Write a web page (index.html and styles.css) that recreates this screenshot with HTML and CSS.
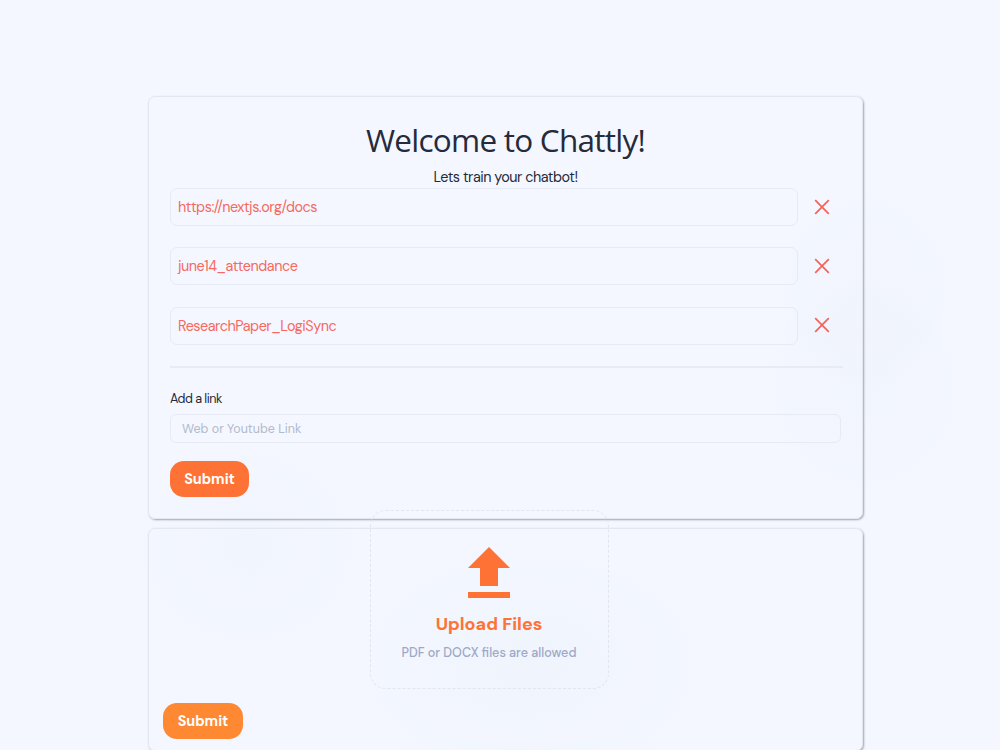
FILE: index.html
```
<!DOCTYPE html>
<html lang="en">
<head>
    <meta charset="UTF-8">
    <meta name="viewport" content="width=device-width, initial-scale=1.0">
    <title>Chattly</title>
    <link rel="stylesheet" href="styles.css">
</head>
<body>
    <div class="container">
        <div class="card train-card">
            <h1>Welcome to Chattly!</h1>
            <p class="subtitle">Lets train your chatbot!</p>

            <div class="source">
                <div class="source-name">https://nextjs.org/docs</div>
                <button class="remove" aria-label="Remove">
                    <svg width="16" height="16" viewBox="0 0 16 16"><path d="M1.2 1.2 14.8 14.8M14.8 1.2 1.2 14.8"/></svg>
                </button>
            </div>
            <div class="source">
                <div class="source-name">june14_attendance</div>
                <button class="remove" aria-label="Remove">
                    <svg width="16" height="16" viewBox="0 0 16 16"><path d="M1.2 1.2 14.8 14.8M14.8 1.2 1.2 14.8"/></svg>
                </button>
            </div>
            <div class="source">
                <div class="source-name">ResearchPaper_LogiSync</div>
                <button class="remove" aria-label="Remove">
                    <svg width="16" height="16" viewBox="0 0 16 16"><path d="M1.2 1.2 14.8 14.8M14.8 1.2 1.2 14.8"/></svg>
                </button>
            </div>

            <hr>

            <form class="link-form">
                <label for="link">Add a link</label>
                <input type="text" id="link" placeholder="Web or Youtube Link">
                <button type="button" class="submit">Submit</button>
            </form>
        </div>

        <div class="card upload-card">
            <div class="dropzone">
                <svg class="upload-icon" width="42" height="51" viewBox="0 0 42 51">
                    <path d="M21 0 42 21H30V39H12V21H0zM0 45H42V51H0z"/>
                </svg>
                <h2>Upload Files</h2>
                <p>PDF or DOCX files are allowed</p>
            </div>
            <button type="button" class="submit submit-files">Submit</button>
        </div>
    </div>
</body>
</html>
```
FILE: styles.css
```
* {
    box-sizing: border-box;
}

body {
    margin: 0;
    height: 750px;
    overflow: hidden;
    font-family: "DM Sans", Inter, sans-serif;
    color: #252b3a;
    background-color: #f4f7ff;
    /* faint blobs behind the cards */
    background-image:
        radial-gradient(ellipse 100px 110px at 865px 385px, rgba(225, 234, 243, 0.14), rgba(225, 234, 243, 0.08) 80%, transparent),
        radial-gradient(ellipse 90px 100px at 866px 290px, rgba(225, 234, 243, 0.12), rgba(225, 234, 243, 0.07) 80%, transparent),
        radial-gradient(ellipse 115px 105px at 248px 548px, rgba(225, 234, 243, 0.17), rgba(225, 234, 243, 0.05) 85%, transparent),
        radial-gradient(ellipse 180px 120px at 530px 665px, rgba(225, 234, 243, 0.22), rgba(225, 234, 243, 0.06) 85%, transparent);
}

.container {
    width: 715px;
    margin: 96px 0 0 148px;
    display: flex;
    flex-direction: column;
    gap: 9px;
}

.card {
    border: 1px solid #e2e7f1;
    border-radius: 7px;
    box-shadow: 1px 1px 2px rgba(60, 65, 75, 0.45);
}

.train-card {
    height: 423px;
    padding: 21px 21px 0 21px;
}

h1 {
    margin: 0;
    font-family: "Segoe UI", "Open Sans", sans-serif;
    font-size: 31.5px;
    font-weight: 400;
    line-height: 44px;
    letter-spacing: -0.75px;
    text-align: center;
}

.subtitle {
    margin: 6px 0 1px;
    font-size: 14.4px;
    line-height: 19px;
    letter-spacing: -0.49px;
    text-align: center;
}

.source {
    display: flex;
    align-items: center;
    gap: 16px;
    margin-bottom: 21.3px;
}

.source-name {
    width: 628px;
    height: 38px;
    padding: 0 7px;
    border: 1px solid #e5eaf4;
    border-radius: 7px;
    font-size: 14.4px;
    line-height: 37px;
    letter-spacing: -0.48px;
    color: #f56a60;
}

.remove {
    display: flex;
    margin-top: -1px;
    padding: 0;
    border: none;
    background: none;
}

.remove svg {
    fill: none;
    stroke: #f56358;
    stroke-width: 1.7;
}

hr {
    width: 673px;
    height: 2px;
    margin: 0;
    border: none;
    background-color: #e7ebf3;
}

.link-form {
    display: flex;
    flex-direction: column;
    align-items: flex-start;
    padding-top: 22px;
}

label {
    font-size: 12.6px;
    line-height: 18px;
    letter-spacing: -0.5px;
}

.link-form input {
    width: 671px;
    height: 29px;
    margin: 6px 0 18px;
    padding: 2px 11px 0;
    border: 1px solid #e5eaf4;
    border-radius: 6px;
    background: transparent;
    font-family: inherit;
    font-size: 12.5px;
}

.link-form input::placeholder {
    color: #b1bac9;
}

.submit {
    width: 79px;
    height: 36px;
    padding: 0;
    border: none;
    border-radius: 14px;
    background-color: #ff7235;
    color: white;
    font-family: inherit;
    font-size: 14.4px;
    font-weight: 700;
}

.upload-card {
    height: 223px;
    padding-left: 14px;
}

.dropzone {
    display: flex;
    flex-direction: column;
    align-items: center;
    width: 239px;
    height: 179px;
    margin: -19px 0 14px 207px;
    padding: 36px 1px 0 0;
    border: 1px dashed #e0e5f1;
    border-radius: 16px;
}

.upload-icon {
    fill: #ff7235;
}

h2 {
    margin: 14px 0 8px;
    font-size: 18px;
    line-height: 24px;
    font-weight: 700;
    color: #ff7235;
}

.dropzone p {
    margin: 0;
    font-size: 12.6px;
    line-height: 19px;
    font-weight: 500;
    color: #9da8c8;
}

.submit-files {
    display: block;
    width: 80px;
    background-color: #ff8833;
}
```
